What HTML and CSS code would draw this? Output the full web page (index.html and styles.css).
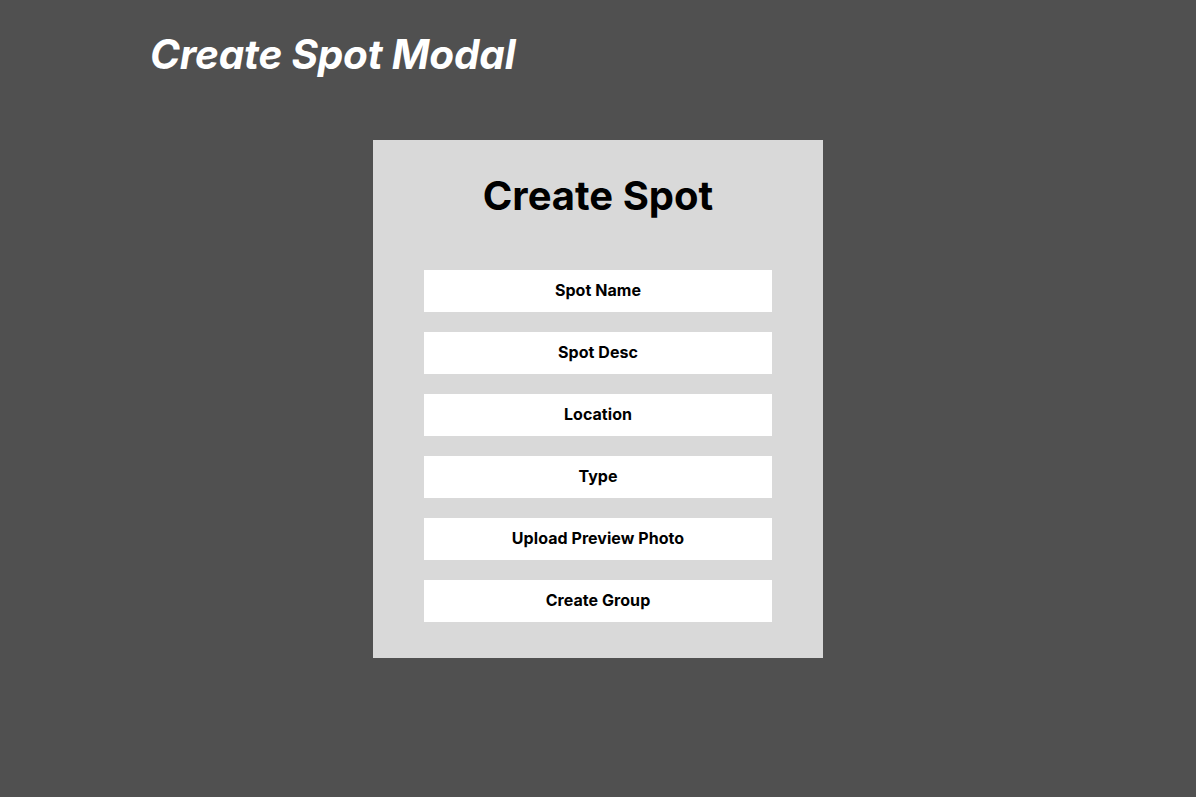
FILE: index.html
```html
<!DOCTYPE html>
<html lang="en">
<head>
<meta charset="utf-8">
<title>Create Spot Modal</title>
<link rel="stylesheet" href="styles.css">
</head>
<body>
  <h1 class="page-title">Create Spot Modal</h1>
  <main class="stage">
    <section class="modal">
      <h2 class="modal-title">Create Spot</h2>
      <div class="fields">
        <div class="field">Spot Name</div>
        <div class="field">Spot Desc</div>
        <div class="field">Location</div>
        <div class="field">Type</div>
        <div class="field">Upload Preview Photo</div>
        <div class="field">Create Group</div>
      </div>
    </section>
  </main>
</body>
</html>
```
FILE: styles.css
```css
html, body {
  margin: 0;
  padding: 0;
}
body {
  background: #505050;
  font-family: Inter, "Noto Sans", "Liberation Sans", sans-serif;
  width: 1196px;
  height: 797px;
  overflow: hidden;
}
.page-title {
  margin: 0;
  padding: 31px 0 0 150px;
  height: 48px;
  font-size: 40.5px;
  line-height: 48px;
  font-weight: 700;
  font-style: italic;
  color: #ffffff;
  letter-spacing: -0.2px;
}
.stage {
  display: flex;
  justify-content: center;
  padding-top: 61px;
}
.modal {
  width: 450px;
  box-sizing: border-box;
  background: #d9d9d9;
  padding: 32px 51px 36px;
  display: flex;
  flex-direction: column;
  align-items: center;
}
.modal-title {
  margin: 0;
  font-size: 40px;
  line-height: 48px;
  font-weight: 700;
  color: #000;
  text-align: center;
}
.fields {
  margin-top: 50px;
  display: flex;
  flex-direction: column;
  gap: 20px;
  width: 348px;
}
.field {
  height: 42px;
  box-sizing: border-box;
  padding-bottom: 2px;
  background: #ffffff;
  display: flex;
  align-items: center;
  justify-content: center;
  font-size: 16px;
  font-weight: 700;
  letter-spacing: 0.05px;
  color: #000;
}
```
